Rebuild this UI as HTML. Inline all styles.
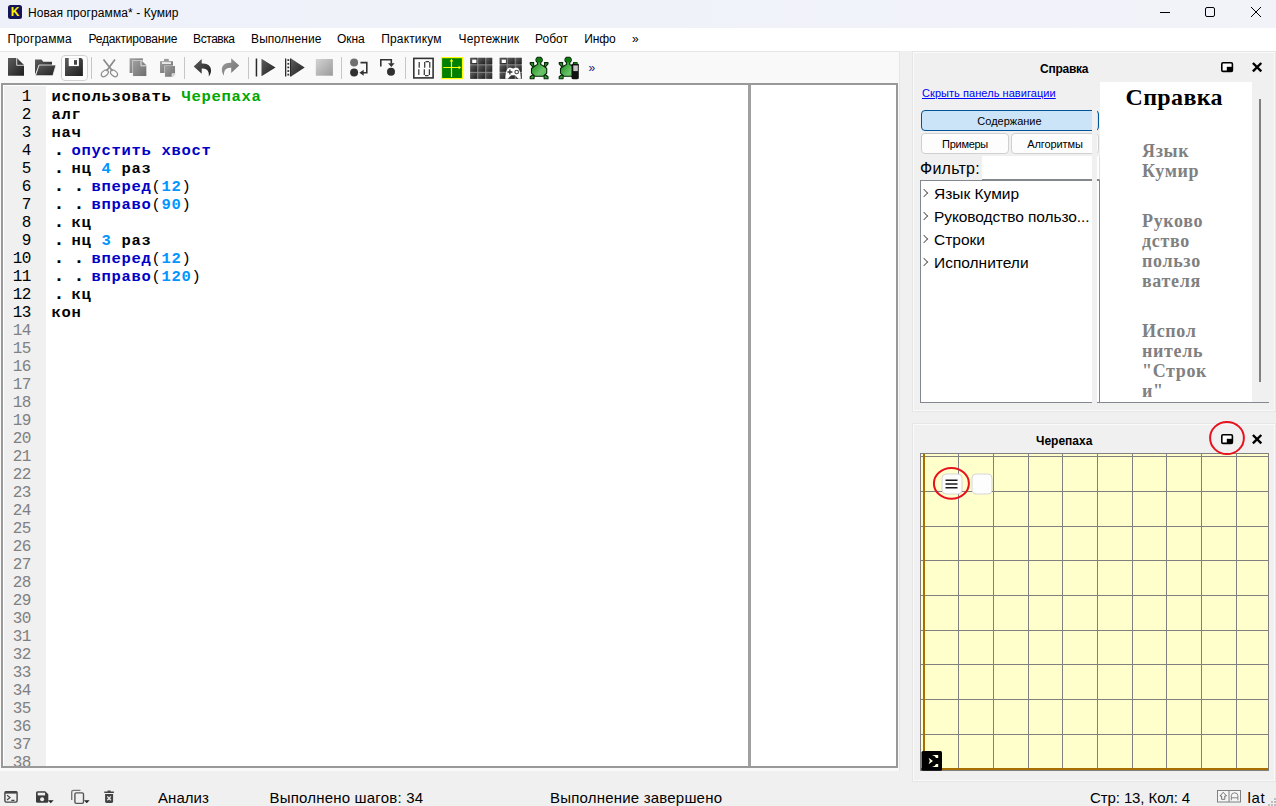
<!DOCTYPE html>
<html lang="ru">
<head>
<meta charset="utf-8">
<title>Новая программа* - Кумир</title>
<style>
*{box-sizing:border-box;margin:0;padding:0}
html,body{width:1276px;height:806px;overflow:hidden;background:#f0f0f0}
body{position:relative;font-family:"Liberation Sans",sans-serif;color:#000;font-size:13px}
.abs{position:absolute}
#titlebar{left:0;top:0;width:1276px;height:28px;background:linear-gradient(90deg,#eef1fa,#f2f3f9)}
#titlebar .ttl{left:28px;top:5px;font-size:12px;line-height:17px;white-space:nowrap;letter-spacing:0.077px}
#kicon{left:8px;top:5px;width:14px;height:14px;background:#14145a;border-radius:2.5px;color:#ffef00;font-weight:bold;font-size:12px;line-height:14px;text-align:center}
#menubar{left:0;top:28px;width:1276px;height:23px;background:#fff}
#menubar span{position:absolute;top:3px;font-size:12px;line-height:17px;white-space:nowrap}
#toolbar{left:0;top:51px;width:900px;height:720px;background:#f9f9f9;border-right:1px solid #e6e6e6;border-top:1px solid #e6e6e6}
.sep{position:absolute;top:57px;width:1px;height:22px;background:#c4c4c4}
#editor{left:1px;top:83px;width:897px;height:685px;border:2px solid #999;background:#fff}
#gutter{left:1px;top:1px;width:42px;height:680px;background:#f0f0f0;overflow:hidden;padding-top:2px}
#gutter div{height:18px;line-height:18px;font-family:"Liberation Mono",monospace;font-size:16px;letter-spacing:-0.6px;color:#808080;text-align:right;padding-right:15.2px;white-space:pre}
#gutter div.on{color:#000}
#code{left:48.500px;top:3px;width:690px;height:678px;overflow:hidden}
#code div{height:18px;line-height:18px;font-family:"Liberation Mono",monospace;font-weight:bold;font-size:15.5px;letter-spacing:0.7px;white-space:pre;color:#000}
#code i{display:inline-block;width:20px;height:10px;line-height:10px;vertical-align:baseline;font-style:normal;font-size:19px;letter-spacing:0;position:relative;left:1.8px}
#code .g{color:#00a800}
#code .b{color:#0000c8}
#code .n{color:#0095ff}
#code .p{font-weight:normal}
#edsplit{left:745px;top:0;width:3px;height:681px;background:#a0a0a0}
.dock{background:#f0f0f0;border:1px solid #fafafa;box-shadow:0 0 0 1px #e6e6e6}
.docktitle{position:absolute;font-weight:bold;font-size:12px;line-height:16px;white-space:nowrap}
#statusbar{left:0;top:780px;width:1276px;height:26px}
#statusbar span{position:absolute;top:9px;font-size:15px;line-height:18px;white-space:nowrap}

.hlink{color:#0000ff;text-decoration:underline;font-size:11px;line-height:14px;white-space:nowrap;letter-spacing:0.06px}
.btn{border:1px solid #d0d0d0;border-radius:4px;background:#fdfdfd;font-size:11px;line-height:21px;text-align:center;white-space:nowrap}
.btn.sel{background:#cce4f7;border-color:#005499}
#tree div{position:relative;height:23px;line-height:23px;font-size:15.500px;padding-left:13px;white-space:nowrap;top:1px}
#tree i{position:absolute;left:2px;top:7px;width:5px;height:8px}
#tree i:before{content:"";position:absolute;left:-2px;top:1px;width:5px;height:5px;border-right:1px solid #666;border-top:1px solid #666;transform:rotate(45deg)}
#helpview .h1{position:absolute;left:25.500px;top:0px;font-family:"Liberation Serif",serif;font-weight:bold;font-size:24px;line-height:30px;white-space:nowrap;letter-spacing:0.35px}
#helpview .hl{position:absolute;left:42px;font-family:"Liberation Serif",serif;font-weight:bold;font-size:18px;line-height:20px;color:#808080;white-space:nowrap;letter-spacing:0.65px}
</style>
</head>
<body>
<!-- TITLE BAR -->
<div id="titlebar" class="abs">
  <div id="kicon" class="abs">K</div>
  <div class="ttl abs">Новая программа* - Кумир</div>
  <svg class="abs" style="left:1150px;top:0" width="126" height="28" viewBox="0 0 126 28" fill="none" stroke="#000" stroke-width="1">
    <path d="M10 12.5H20"/>
    <rect x="55.5" y="7.5" width="9" height="9" rx="1.5"/>
    <path d="M101 7L111 17M111 7L101 17"/>
  </svg>
</div>
<!-- MENU BAR -->
<div id="menubar" class="abs">
  <span style="left:7.5px;letter-spacing:0.158px">Программа</span>
  <span style="left:88.4px;letter-spacing:-0.180px">Редактирование</span>
  <span style="left:193.1px;letter-spacing:-0.444px">Вставка</span>
  <span style="left:251.1px;letter-spacing:0.046px">Выполнение</span>
  <span style="left:337.0px;letter-spacing:-0.048px">Окна</span>
  <span style="left:381.2px;letter-spacing:0.160px">Практикум</span>
  <span style="left:458.6px;letter-spacing:0.101px">Чертежник</span>
  <span style="left:535.1px;letter-spacing:-0.028px">Робот</span>
  <span style="left:584.2px;letter-spacing:-0.128px">Инфо</span>
  <span style="left:632.0px;letter-spacing:0.000px">»</span>
</div>
<!-- TOOLBAR -->
<div id="toolbar" class="abs">
<svg class="abs" style="left:0;top:-1px" width="900" height="33" viewBox="0 51 900 33">
<defs>
<linearGradient id="gd" x1="0" y1="0" x2="1" y2="1"><stop offset="0" stop-color="#5e5e5e"/><stop offset="1" stop-color="#1e1e1e"/></linearGradient>
<linearGradient id="gg" x1="0" y1="0" x2="1" y2="1"><stop offset="0" stop-color="#a0a0a0"/><stop offset="1" stop-color="#6e6e6e"/></linearGradient>
<linearGradient id="gs" x1="0" y1="0" x2="1" y2="1"><stop offset="0" stop-color="#d4d4d4"/><stop offset="1" stop-color="#9a9a9a"/></linearGradient>
<linearGradient id="gt" x1="0" y1="0" x2="1" y2="1"><stop offset="0.15" stop-color="#148a14"/><stop offset="0.7" stop-color="#6cc46c"/><stop offset="1" stop-color="#4fb54f"/></linearGradient>
<g id="turtle">
<path d="M14.5 5.6L18.0 5.6L18.0 6.8L15.6 9.6L14.1 8.6L14.7 7.2z" fill="#2fa22f" stroke="#082408" stroke-width="1.1" stroke-linejoin="round"/>
<path d="M3.7 5.6L0.2 5.6L0.2 6.8L2.6 9.6L4.1 8.6L3.5 7.2z" fill="#2fa22f" stroke="#082408" stroke-width="1.1" stroke-linejoin="round"/>
<path d="M14.7 17.2L18.0 19.8L18.0 21.7L14.2 21.7L14.0 18.9z" fill="#2fa22f" stroke="#082408" stroke-width="1.1" stroke-linejoin="round"/>
<path d="M3.5 17.2L0.2 19.8L0.2 21.7L4.0 21.7L4.2 18.9z" fill="#2fa22f" stroke="#082408" stroke-width="1.1" stroke-linejoin="round"/>
<path d="M9.1 0.3L10.9 0.3L12.2 2.0L12.2 3.8L10.7 5.6L10.7 7.4L14.5 9.7L16.7 11.5L16.7 16.1L13.2 19.3L9.1 19.3L9.1 19.3L5.0 19.3L1.5 16.1L1.5 11.5L3.7 9.7L7.5 7.4L7.5 5.6L6.0 3.8L6.0 2.0L7.3 0.3L9.1 0.3z" fill="url(#gt)" stroke="#082408" stroke-width="1.1" stroke-linejoin="round"/>
<path d="M7.7 0.9h2.800l1.100 1.400v1.400l-1.300 1.600h-2.400l-1.300-1.600v-1.400z" fill="#0a7c0a"/>
</g>
<g id="grid9">
<rect x="0" y="0" width="22" height="21" fill="#8c8c8c"/>
<g fill="url(#gd)">
<rect x="0" y="0" width="7" height="6.500"/><rect x="8" y="0" width="7" height="6.500"/><rect x="16" y="0" width="6" height="6.500"/>
<rect x="0" y="7.500" width="7" height="6.500"/><rect x="8" y="7.500" width="7" height="6.500"/><rect x="16" y="7.500" width="6" height="6.500"/>
<rect x="0" y="15" width="7" height="6"/><rect x="8" y="15" width="7" height="6"/><rect x="16" y="15" width="6" height="6"/>
</g>
<rect x="2" y="1.800" width="4.200" height="3.400" fill="#fff"/>
</g>
</defs>
<!-- new -->
<path d="M8 58h9l7 7v10.700H8z" fill="url(#gd)"/>
<path d="M16.700 58v7.300H24" fill="none" stroke="#e8e8e8" stroke-width="0.900"/>
<!-- open -->
<path d="M35 59.500h6.500l1.800 2.300H52v3.500H39l-4 9.500z" fill="url(#gd)"/>
<path d="M39 65h17l-3.200 10.700H35.500z" fill="url(#gd)" stroke="#f4f4f4" stroke-width="0.800"/>
<!-- save (checked) -->
<rect x="61.500" y="55.500" width="26" height="25" rx="3.500" fill="#fdfdfd" stroke="#d2d2d2" stroke-width="1"/>
<path d="M65 58.100h16.300l1.600 1.600v16.400H65z" fill="url(#gd)"/>
<rect x="68.700" y="58.100" width="10.200" height="8" fill="#fff"/>
<rect x="74" y="60.100" width="3" height="4.600" fill="#444"/>
<!-- separators -->
<path d="M91.500 57v22M184.500 57v22M248.500 57v22M341.500 57v22M405.500 57v22" stroke="#c6c6c6" stroke-width="1"/>
<!-- cut -->
<g fill="none" stroke="#8a8a8a" stroke-width="1.200">
<path d="M103.500 59.500L112.500 71M115 59.500L106.500 71" stroke-width="1.700"/>
<ellipse cx="104.800" cy="73.300" rx="2.600" ry="4" transform="rotate(48 104.800 73.300)"/>
<ellipse cx="114" cy="73.300" rx="2.600" ry="4" transform="rotate(-48 114 73.300)"/>
</g>
<!-- copy -->
<path d="M129.600 58.300h13.300V73H129.600z" fill="url(#gg)"/>
<path d="M132.500 60h9.500l4.800 5v11.400H132.500z" fill="#f0f0f0"/>
<path d="M133 60.500h8.500l4.800 4.800v10.600H133z" fill="url(#gg)"/>
<path d="M141 60.500v5.300h5.300" fill="none" stroke="#efefef" stroke-width="0.900"/>
<!-- paste -->
<path d="M164 58.900h4.800v2.300H164z" fill="#9a9a9a"/>
<path d="M160 61.200h13V73h-13z" fill="url(#gg)"/>
<rect x="162" y="62.200" width="9" height="1.700" fill="#f4f4f4"/>
<path d="M164.500 65.600h11v11.600h-11z" fill="#f0f0f0"/>
<path d="M165 66.100h10v7.600l-3 3H165z" fill="url(#gg)"/>
<path d="M172 76.700v-3h3" fill="#cfcfcf" stroke="#eee" stroke-width="0.700"/>
<!-- undo -->
<path d="M193.700 66.500L201.700 59v4.600c5.800-0.600 9.800 2.600 9.300 7.600c-0.200 2-1 3.600-2.200 5.300c0.500-4-0.800-8.400-7.100-7.900v5.200z" fill="url(#gd)"/>
<!-- redo -->
<path d="M239.200 65.500L231.200 58.200v4.600c-5.800-0.600-9.800 2.600-9.300 7.600c0.200 2 1 3.600 2.200 5.300c-0.500-4 0.800-8.400 7.100-7.900v5.200z" fill="url(#gg)"/>
<!-- run -->
<rect x="255.700" y="58.500" width="1.500" height="18" fill="#2a2a2a"/>
<path d="M261.500 58.700v17.600l14-8.800z" fill="url(#gd)"/>
<!-- step run -->
<rect x="285" y="58.500" width="1.300" height="18" fill="#2a2a2a"/>
<rect x="290" y="58.500" width="1.200" height="18" fill="#2a2a2a"/>
<g fill="#333"><rect x="287.400" y="59.200" width="1.800" height="1.800"/><rect x="287.400" y="62.900" width="1.800" height="1.800"/><rect x="287.400" y="66.500" width="1.800" height="1.800"/><rect x="287.400" y="70.100" width="1.800" height="1.800"/><rect x="287.400" y="73.700" width="1.800" height="1.800"/></g>
<path d="M291 58.500v18l13.700-9z" fill="url(#gd)"/>
<!-- stop -->
<rect x="315.800" y="59" width="17.100" height="16.700" fill="url(#gs)"/>
<!-- step in -->
<circle cx="354.100" cy="62.600" r="4" fill="#707070"/>
<circle cx="354.100" cy="72.400" r="4" fill="#303030"/>
<path d="M360.500 62.600h6.300v10.200h-4.300" fill="none" stroke="#333" stroke-width="1.600"/>
<path d="M359.400 72.800l4.300-3v6z" fill="#333"/>
<!-- step out -->
<path d="M380.800 66.500v-6.700h10.500v4" fill="none" stroke="#333" stroke-width="1.600"/>
<path d="M391.300 67l-3.300-3.800h6.600z" fill="#333"/>
<circle cx="391" cy="71.700" r="4" fill="#303030"/>
<!-- 10 display -->
<rect x="413.800" y="58.400" width="19.300" height="19.500" fill="#fff" stroke="#333" stroke-width="1.600"/>
<g fill="none" stroke="#3a3a3a" stroke-width="1.250"><path d="M419.200 62v5.800M418.800 69.200v5.800"/><path d="M424.700 62v5.800M424.300 69.200v5.800M429.800 62v5.800M429.400 69.200v5.800M425.500 61.500h3.600M425 75.500h3.600"/></g>
<!-- axes -->
<rect x="441.500" y="57.600" width="21" height="21" fill="#008000" stroke="#ffff00" stroke-width="1.200"/>
<path d="M451.500 60v17M443.300 67.500h16.500" stroke="#ffff00" stroke-width="1.200"/>
<path d="M451.500 58.800l-1.800 2.600h3.600zM461.200 67.500l-2.600-1.800v3.600z" fill="#ffff00"/>
<!-- grids -->
<use href="#grid9" x="470.200" y="57.800"/>
<use href="#grid9" x="499.700" y="57.800"/>
<path d="M505.300 78.800c0.200-5.500 1.200-10.200 3.800-11c1.600-0.400 2.400 0.600 4 0.600c1.600 0 2.400-1 4-0.600c2.600 0.800 3.600 5.500 3.800 11h-2.500l-3.300-3.600h-4l-3.300 3.600z" fill="#fff"/>
<path d="M507.400 72h5M509.900 69.500v5" stroke="#333" stroke-width="1.300"/>
<circle cx="516.700" cy="72" r="1.800" fill="none" stroke="#444" stroke-width="1.100"/>
<!-- turtles -->
<use href="#turtle" x="530" y="57"/>
<use href="#turtle" x="559" y="57"/>
<rect x="571.500" y="63.800" width="7.300" height="15.100" rx="0.800" fill="#111"/>
<rect x="573.300" y="65.400" width="4.500" height="5.700" fill="#c6c6c6"/>
<rect x="573.800" y="62.600" width="3.200" height="1.300" fill="#1a7a1a"/>
</svg>
<div class="abs" style="left:588.500px;top:9px;font-size:12px;line-height:14px;color:#1a1a7a">»</div>
</div>
<!-- EDITOR -->
<div id="editor" class="abs">
  <div id="gutter" class="abs">
<div class="on"> 1</div><div class="on"> 2</div><div class="on"> 3</div><div class="on"> 4</div><div class="on"> 5</div><div class="on"> 6</div><div class="on"> 7</div><div class="on"> 8</div><div class="on"> 9</div><div class="on">10</div><div class="on">11</div><div class="on">12</div><div class="on">13</div><div>14</div><div>15</div><div>16</div><div>17</div><div>18</div><div>19</div><div>20</div><div>21</div><div>22</div><div>23</div><div>24</div><div>25</div><div>26</div><div>27</div><div>28</div><div>29</div><div>30</div><div>31</div><div>32</div><div>33</div><div>34</div><div>35</div><div>36</div><div>37</div><div>38</div>
  </div>
  <div id="code" class="abs">
<div>использовать <span class="g">Черепаха</span></div>
<div>алг</div>
<div>нач</div>
<div><i>.</i><span class="b">опустить хвост</span></div>
<div><i>.</i>нц <span class="n">4</span> раз</div>
<div><i>.</i><i>.</i><span class="b">вперед</span><span class="p">(</span><span class="n">12</span><span class="p">)</span></div>
<div><i>.</i><i>.</i><span class="b">вправо</span><span class="p">(</span><span class="n">90</span><span class="p">)</span></div>
<div><i>.</i>кц</div>
<div><i>.</i>нц <span class="n">3</span> раз</div>
<div><i>.</i><i>.</i><span class="b">вперед</span><span class="p">(</span><span class="n">12</span><span class="p">)</span></div>
<div><i>.</i><i>.</i><span class="b">вправо</span><span class="p">(</span><span class="n">120</span><span class="p">)</span></div>
<div><i>.</i>кц</div>
<div>кон</div>
  </div>
  <div id="edsplit" class="abs"></div>
</div>
<!-- HELP DOCK -->
<div id="helpdock" class="abs dock" style="left:913px;top:52px;width:362px;height:359px">
  <div class="docktitle" style="left:126px;top:8px;letter-spacing:-0.25px">Справка</div>
  <svg class="abs" style="left:307px;top:9px" width="44" height="12" viewBox="0 0 44 12">
    <rect x="0.8" y="0.8" width="10.600" height="8.600" rx="1.2" fill="#fff" stroke="#000" stroke-width="1.6"/>
    <rect x="5.800" y="4.800" width="5.600" height="4.600" fill="#000"/>
    <path d="M31.900 1L40.300 9.400M40.300 1L31.900 9.400" stroke="#000" stroke-width="2.400" fill="none"/>
  </svg>
  <div class="abs hlink" style="left:8px;top:33px">Скрыть панель навигации</div>
  <div class="abs btn sel" style="left:7px;top:57px;width:178px;height:21px;padding-right:1px">Содержание</div>
  <div class="abs btn" style="left:7px;top:80px;width:88px;height:21px;letter-spacing:-0.3px">Примеры</div>
  <div class="abs btn" style="left:97px;top:80px;width:88px;height:21px;letter-spacing:-0.1px">Алгоритмы</div>
  <div class="abs" style="left:6px;top:107px;font-size:16px;line-height:18px;letter-spacing:0.25px">Фильтр:</div>
  <div class="abs" style="left:68px;top:103px;width:118px;height:24px;background:#fff;border-bottom:1px solid #868686;border-right:1px solid #e0e0e0"></div>
  <div class="abs" id="tree" style="left:6px;top:127px;width:180px;height:223px;background:#fff;border:1px solid #828790">
    <div><i></i>Язык Кумир</div>
    <div style="letter-spacing:-0.08px"><i></i>Руководство пользо...</div>
    <div><i></i>Строки</div>
    <div><i></i>Исполнители</div>
  </div>
  <div class="abs" style="left:178px;top:29px;width:5px;height:323px;background:#f0f0f0"></div>
  <div class="abs" style="left:186px;top:29px;width:152px;height:320px;background:#fff;overflow:hidden" id="helpview">
    <div class="h1">Справка</div>
    <div class="hl" style="top:59px">Язык<br>Кумир</div>
    <div class="hl" style="top:129px">Руково<br>дство<br>пользо<br>вателя</div>
    <div class="hl" style="top:239px">Испол<br>нитель<br>"Строк<br>и"</div>
  </div>
  <div class="abs" style="left:184px;top:349px;width:171px;height:1px;background:#828790"></div>
  <div class="abs" style="left:345px;top:46px;width:2px;height:283px;background:#808080"></div>
</div>
<!-- TURTLE DOCK -->
<div id="turtledock" class="abs dock" style="left:913px;top:424px;width:362px;height:357px">
  <div class="docktitle" style="left:122px;top:8px">Черепаха</div>
  <svg class="abs" style="left:307px;top:9px" width="44" height="12" viewBox="0 0 44 12">
    <rect x="0.8" y="0.8" width="10.600" height="8.600" rx="1.2" fill="#fff" stroke="#000" stroke-width="1.6"/>
    <rect x="5.800" y="4.800" width="5.600" height="4.600" fill="#000"/>
    <path d="M31.900 1L40.300 9.400M40.300 1L31.900 9.400" stroke="#000" stroke-width="2.400" fill="none"/>
  </svg>
  <svg class="abs" style="left:6px;top:28px" width="349" height="318" viewBox="920 453 349 318">
    <rect x="920" y="453" width="349" height="318" fill="#ffffcc"/>
    <g stroke="#808080" stroke-width="1" fill="none" shape-rendering="crispEdges">
      <path d="M958.5 453V771M993.5 453V771M1028.5 453V771M1062.5 453V771M1097.5 453V771M1132.5 453V771M1166.5 453V771M1201.5 453V771M1236.5 453V771"/>
      <path d="M920 456.5H1269M920 491.5H1269M920 526.5H1269M920 560.5H1269M920 595.5H1269M920 630.5H1269M920 664.5H1269M920 699.5H1269M920 734.5H1269"/>
    </g>
    <path d="M924 453V771" stroke="#a86e00" stroke-width="2" shape-rendering="crispEdges"/>
    <path d="M921 769H1269" stroke="#a86e00" stroke-width="2" shape-rendering="crispEdges"/>
    <rect x="920.5" y="453.5" width="348" height="317" fill="none" stroke="#808080" stroke-width="1" shape-rendering="crispEdges"/>
    <rect x="942" y="474" width="20" height="20" rx="4" fill="#fdfdfd" stroke="#d6d6d6" stroke-width="1"/>
    <path d="M945.5 480.3H957.5M945.5 484H957.5M945.5 487.7H957.5" stroke="#1a1a1a" stroke-width="1.5"/>
    <rect x="972" y="474" width="20" height="20" rx="4" fill="#fdfdfd" stroke="#d6d6d6" stroke-width="1"/>
    <rect x="921.500" y="751" width="20.500" height="19.700" rx="1.500" fill="#000"/>
    <path d="M928.600 757.800l4.400 3.200l-4.400 3.200l1.200-3.200z" fill="#ffffd8"/>
    <path d="M932 755h6.200v3h-2.200l-1.200-1.800zM932 767h6.200v-3h-2.200l-1.200 1.800z" fill="#ffffd8"/>
    <ellipse cx="951.4" cy="483.4" rx="17.5" ry="15.3" fill="none" stroke="#e8121f" stroke-width="2"/>
  </svg>
  <svg class="abs" style="left:289px;top:-7px" width="50" height="42" viewBox="1203 418 50 42">
    <ellipse cx="1227" cy="438" rx="16.900" ry="16.100" fill="none" stroke="#e8121f" stroke-width="2"/>
  </svg>
</div>
<!-- STATUS BAR -->
<div id="statusbar" class="abs">
  <svg class="abs" style="left:0;top:6px" width="130" height="20" viewBox="0 786 130 20">
    <rect x="4.900" y="791.700" width="12.200" height="10.400" rx="1.300" fill="none" stroke="#444" stroke-width="1.400"/>
    <rect x="4.900" y="791.400" width="12.200" height="2.200" fill="#444"/>
    <path d="M7 795.300l3 2.300l-3 2.300M11.300 800.300h3.200" fill="none" stroke="#444" stroke-width="1.200"/>
    <path d="M36 792.700q0-1.500 1.500-1.500h7.700l3.100 3.100v7q0 1.500-1.500 1.500h-9.300q-1.500 0-1.500-1.500z" fill="#3c3c3c"/>
    <rect x="37.700" y="792.700" width="7.400" height="2.700" fill="#f0f0f0"/>
    <circle cx="42.100" cy="799.300" r="2" fill="#f0f0f0"/>
    <path d="M48 800.200h5.600l-2.800 3z" fill="#222"/>
    <path d="M80.400 790.400h-7q-1.700 0-1.700 1.700v7.900" fill="none" stroke="#777" stroke-width="1.400"/>
    <rect x="74.900" y="792.900" width="8.600" height="10.500" rx="1.400" fill="none" stroke="#555" stroke-width="1.400"/>
    <path d="M84 800.200h5.600l-2.800 3z" fill="#222"/>
    <path d="M104.300 792.300h9.600M107.600 791.200h3" stroke="#444" stroke-width="1.500" fill="none"/>
    <path d="M105.100 794h8v7.600q0 1.400-1.400 1.400h-5.200q-1.400 0-1.400-1.400z" fill="#444"/>
    <path d="M107.300 796.400l3.600 3.800M110.900 796.400l-3.600 3.800" stroke="#f0f0f0" stroke-width="1.300"/>
  </svg>
  <span style="left:158px;letter-spacing:0.06px">Анализ</span>
  <span style="left:269.500px;letter-spacing:0.2px">Выполнено шагов: 34</span>
  <span style="left:550px;letter-spacing:0.2px">Выполнение завершено</span>
  <span style="left:1090px;letter-spacing:-0.1px">Стр: 13, Кол: 4</span>
  <span style="left:1247.500px;letter-spacing:0.7px">lat</span>
  <svg class="abs" style="left:1215px;top:9px" width="28" height="15" viewBox="1215 789 28 15">
    <rect x="1217.500" y="790.500" width="23" height="11.500" fill="#f6f6f6" stroke="#808080" stroke-width="1"/>
    <path d="M1229 790.500v11.500" stroke="#808080" stroke-width="1"/>
    <path d="M1223.200 792.300l3.300 3.700h-1.700v3.300h-3.200V796h-1.700z" fill="none" stroke="#666" stroke-width="0.900"/>
    <path d="M1231.300 800.300v-4.500q0-3 3.300-3q3.300 0 3.300 3v4.500M1231.300 797.800h6.600" fill="none" stroke="#777" stroke-width="0.900"/>
  </svg>
  <svg class="abs" style="left:1264px;top:14px" width="12" height="12" viewBox="0 0 12 12" fill="#bdbdbd">
    <rect x="7" y="7" width="2" height="2"/><rect x="10" y="7" width="2" height="2"/><rect x="10" y="4" width="2" height="2"/><rect x="10" y="10" width="2" height="2"/><rect x="7" y="10" width="2" height="2"/><rect x="4" y="10" width="2" height="2"/>
  </svg>
</div>
</body>
</html>
